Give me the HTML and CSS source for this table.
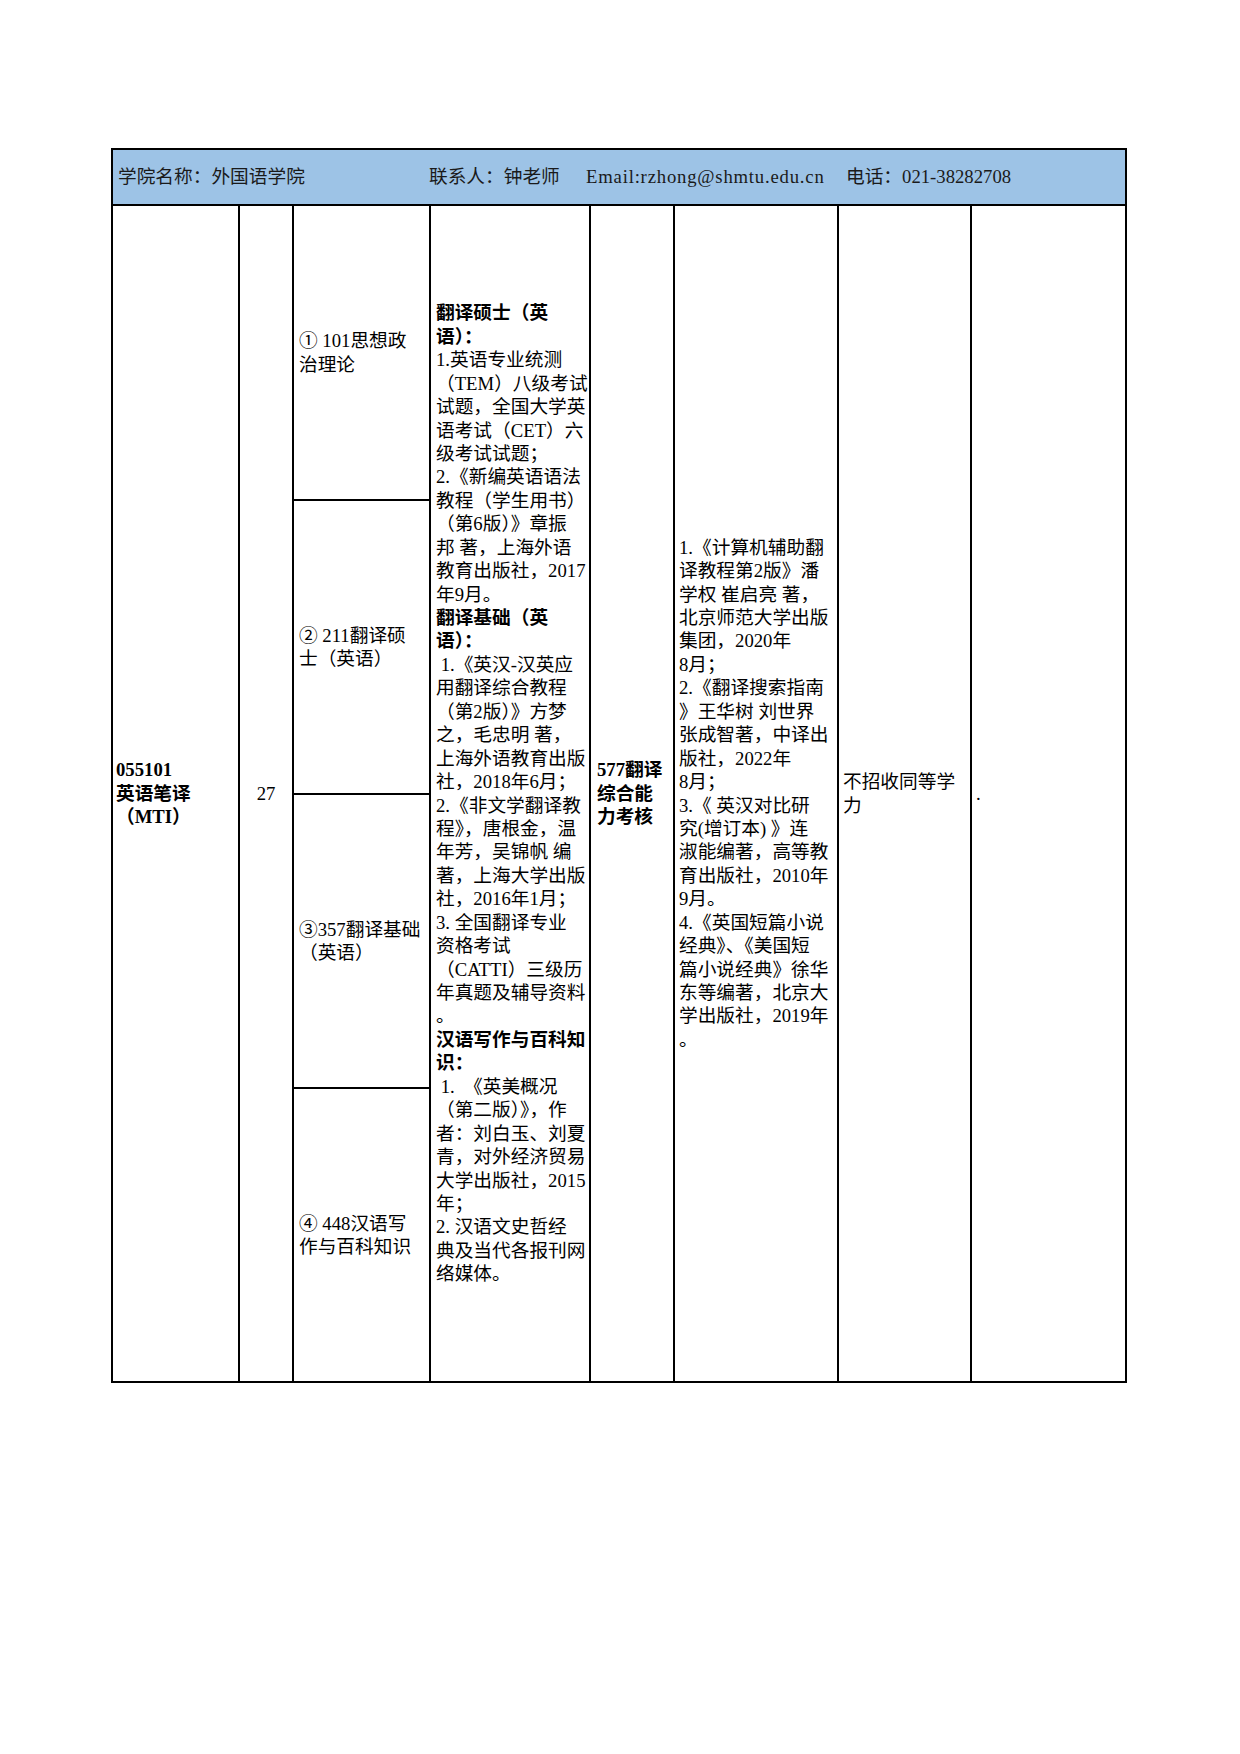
FILE: index.html
```html
<!DOCTYPE html>
<html lang="zh-CN">
<head>
<meta charset="utf-8">
<title>外国语学院</title>
<link rel="stylesheet" href="styles.css">
</head>
<body>
<div class="page">
<table class="grid">
<colgroup>
<col class="w1"><col class="w2"><col class="w3"><col class="w4"><col class="w5"><col class="w6"><col class="w7"><col class="w8">
</colgroup>
<tr class="rh">
<td colspan="8" class="head">
<div class="headline">
<span class="h1">学院名称：外国语学院</span>
<span class="h2">联系人：钟老师</span>
<span class="h3">Email:rzhong@shmtu.edu.cn</span>
<span class="h4">电话：021-38282708</span>
</div>
</td>
</tr>
<tr class="r1">
<td rowspan="4" class="c1 bold">055101<br>英语笔译<br>（MTI）</td>
<td rowspan="4" class="c2">27</td>
<td class="c3">①&nbsp;101思想政<br>治理论</td>
<td rowspan="4" class="c4"><span class="bold">翻译硕士（英<br>语）：</span><br>1.英语专业统测<br>（TEM）八级考试<br>试题，全国大学英<br>语考试（CET）六<br>级考试试题；<br>2.《新编英语语法<br>教程（学生用书）<br>（第6版）》章振<br>邦&nbsp;著，上海外语<br>教育出版社，2017<br>年9月。<br><span class="bold">翻译基础（英<br>语）：</span><br>&nbsp;1.《英汉-汉英应<br>用翻译综合教程<br>（第2版）》方梦<br>之，毛忠明&nbsp;著，<br>上海外语教育出版<br>社，2018年6月；<br>2.《非文学翻译教<br>程》，唐根金，温<br>年芳，吴锦帆&nbsp;编<br>著，上海大学出版<br>社，2016年1月；<br>3.&nbsp;全国翻译专业<br>资格考试<br>（CATTI）三级历<br>年真题及辅导资料<br>。<br><span class="bold">汉语写作与百科知<br>识：</span><br>&nbsp;1.&nbsp;&nbsp;《英美概况<br>（第二版）》，作<br>者：刘白玉、刘夏<br>青，对外经济贸易<br>大学出版社，2015<br>年；<br>2.&nbsp;汉语文史哲经<br>典及当代各报刊网<br>络媒体。</td>
<td rowspan="4" class="c5 bold">577翻译<br>综合能<br>力考核</td>
<td rowspan="4" class="c6">1.《计算机辅助翻<br>译教程第2版》潘<br>学权&nbsp;崔启亮&nbsp;著，<br>北京师范大学出版<br>集团，2020年<br>8月；<br>2.《翻译搜索指南<br>》王华树&nbsp;刘世界<br>张成智著，中译出<br>版社，2022年<br>8月；<br>3.《&nbsp;英汉对比研<br>究(增订本)&nbsp;》连<br>淑能编著，高等教<br>育出版社，2010年<br>9月。<br>4.《英国短篇小说<br>经典》、《美国短<br>篇小说经典》徐华<br>东等编著，北京大<br>学出版社，2019年<br>。</td>
<td rowspan="4" class="c7">不招收同等学<br>力</td>
<td rowspan="4" class="c8">.</td>
</tr>
<tr class="r2">
<td class="c3">②&nbsp;211翻译硕<br>士（英语）</td>
</tr>
<tr class="r3">
<td class="c3">③357翻译基础<br>（英语）</td>
</tr>
<tr class="r4">
<td class="c3">④&nbsp;448汉语写<br>作与百科知识</td>
</tr>
</table>
</div>
</body>
</html>
```

FILE: styles.css
```css
html, body {
  margin: 0;
  padding: 0;
  background: #ffffff;
}

body {
  font-family: "Liberation Serif", "Noto Sans CJK SC", serif;
  font-size: 18.7px;
  line-height: 23.44px;
  color: #000000;
}

.page {
  padding: 148px 0 0 111px;
  min-height: 1754px;
  box-sizing: border-box;
}

.grid {
  border-collapse: separate;
  border-spacing: 0;
  table-layout: fixed;
  width: 1016px;
  border-top: 2px solid #000;
  border-left: 2px solid #000;
}

.w1 { width: 127px; }
.w2 { width: 54px; }
.w3 { width: 137px; }
.w4 { width: 160px; }
.w5 { width: 84px; }
.w6 { width: 164px; }
.w7 { width: 133px; }
.w8 { width: 155px; }

.grid td {
  border-right: 2px solid #000;
  border-bottom: 2px solid #000;
  padding: 0 2px 0 4px;
  vertical-align: middle;
  text-align: left;
  white-space: nowrap;
  overflow: visible;
}

.rh { height: 56px; }
.r1 { height: 295px; }
.r2 { height: 294px; }
.r3 { height: 294px; }
.r4 { height: 294px; }

.grid td.head {
  background: #9dc3e6;
  padding: 0 0 0 5px;
}

.headline {
  display: flex;
  align-items: center;
  color: #1a1a1a;
}

.h1 { width: 311px; }
.h2 { width: 157px; }
.h3 { width: 260px; letter-spacing: 0.8px; }

.bold {
  font-weight: 700;
}

.grid td.c1 { padding-left: 3px; }
.grid td.c2 { text-align: center; padding: 0; }
.grid td.c3 { padding-left: 5px; }
.grid td.c4 { padding-left: 5px; }
.grid td.c5 { padding-left: 6px; }
.grid td.c6 { padding-left: 4px; }
.grid td.c7 { padding-left: 4px; }
.grid td.c8 { padding-left: 4px; }
```
